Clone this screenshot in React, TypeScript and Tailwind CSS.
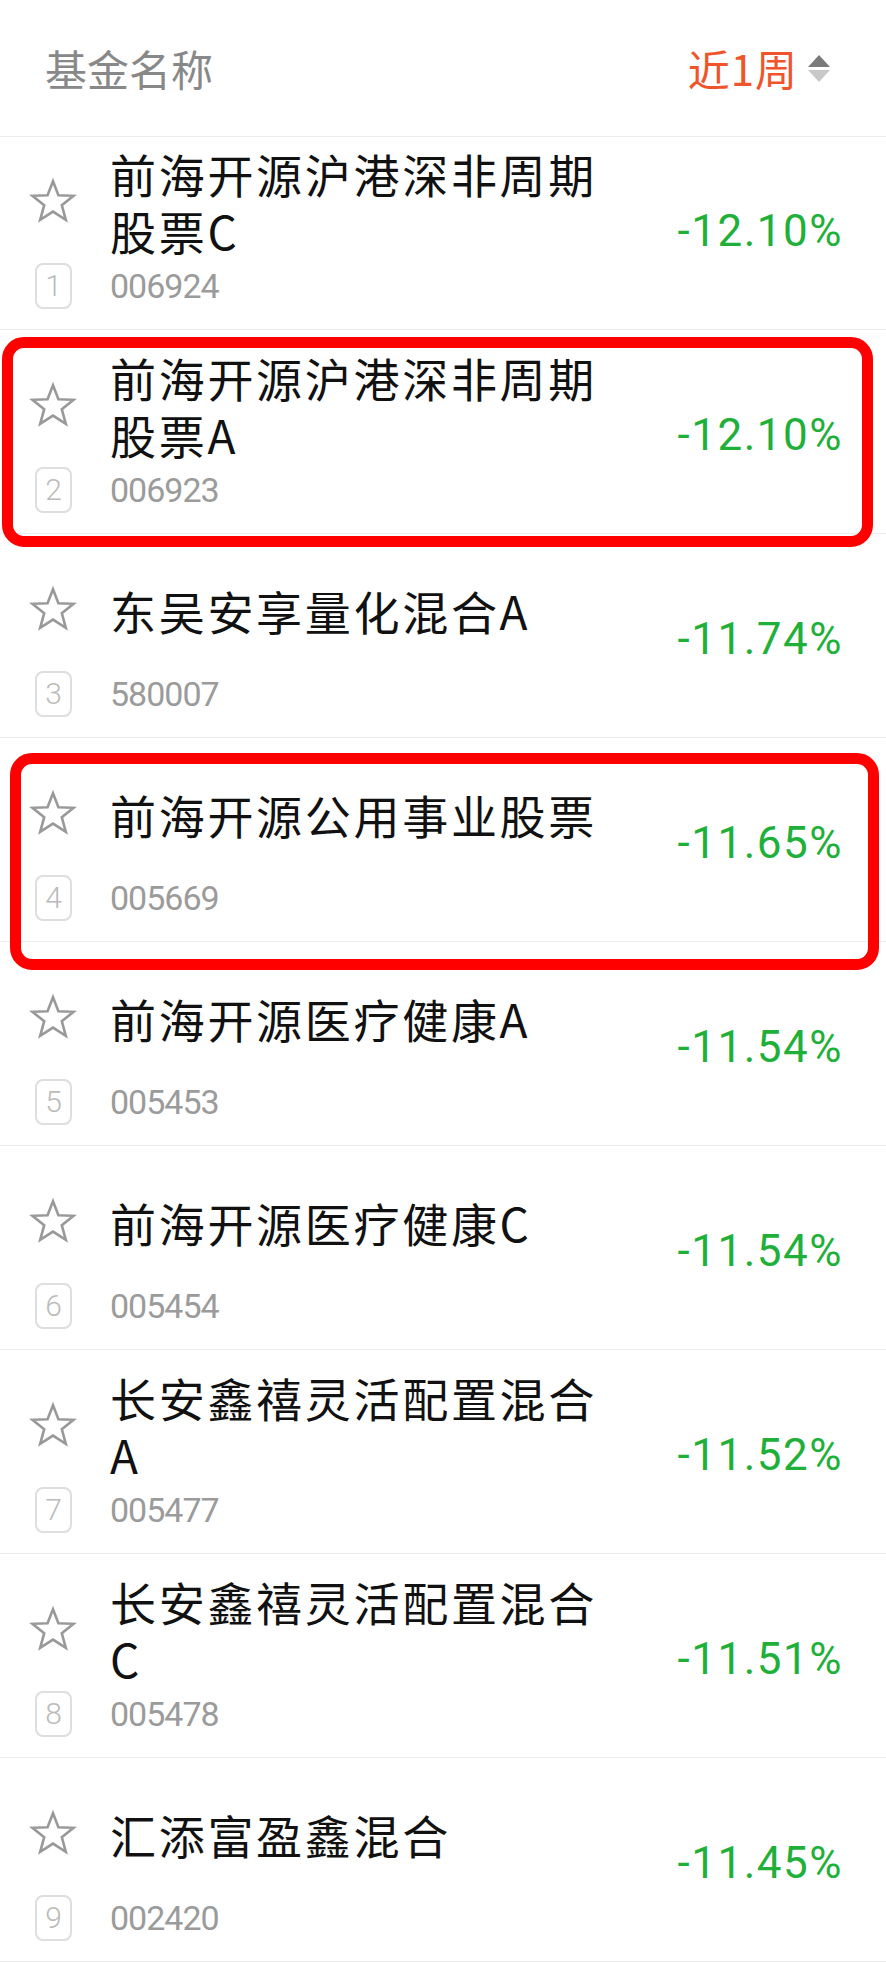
import React from 'react'

type Fund = {
    rank: number
    name: string
    code: string
    change: string
}

const FUNDS: Fund[] = [
    { rank: 1, name: '前海开源沪港深非周期股票C', code: '006924', change: '-12.10%' },
    { rank: 2, name: '前海开源沪港深非周期股票A', code: '006923', change: '-12.10%' },
    { rank: 3, name: '东吴安享量化混合A', code: '580007', change: '-11.74%' },
    { rank: 4, name: '前海开源公用事业股票', code: '005669', change: '-11.65%' },
    { rank: 5, name: '前海开源医疗健康A', code: '005453', change: '-11.54%' },
    { rank: 6, name: '前海开源医疗健康C', code: '005454', change: '-11.54%' },
    { rank: 7, name: '长安鑫禧灵活配置混合A', code: '005477', change: '-11.52%' },
    { rank: 8, name: '长安鑫禧灵活配置混合C', code: '005478', change: '-11.51%' },
    { rank: 9, name: '汇添富盈鑫混合', code: '002420', change: '-11.45%' },
]

const CJK = "font-['Noto_Sans_CJK_SC','Noto_Sans',sans-serif]"
const NUM = "font-['Roboto','Noto_Sans_CJK_SC',sans-serif]"

function StarIcon() {
    return (
        <svg width="48" height="48" viewBox="0 0 24 24" fill="none" aria-hidden="true">
            <polygon
                points="12,1.6 14.7,8.6 22.3,8.9 16.4,13.6 18.4,20.9 12,16.8 5.6,20.9 7.6,13.6 1.7,8.9 9.3,8.6"
                stroke="#999"
                strokeWidth="1.3"
                strokeLinejoin="miter"
            />
        </svg>
    )
}

function SortIcon() {
    return (
        <svg width="22" height="27" viewBox="0 0 22 27" aria-hidden="true" className="ml-[10px]">
            <polygon points="11,0 22,12 0,12" fill="#7a7a7a" />
            <polygon points="0,15 22,15 11,27" fill="#c8c8c8" />
        </svg>
    )
}

function FundRow({ fund }: { fund: Fund }) {
    return (
        <div className="flex h-[204px] items-center border-b border-[#ececec] pr-[43px]">
            <div className="flex flex-1 flex-col self-stretch pt-[14px]">
                <div className="flex h-[124px] items-center">
                    <div className="ml-[29px] flex w-[48px] justify-center">
                        <StarIcon />
                    </div>
                    <div
                        className={`ml-[33px] w-[500px] text-[46px] leading-[57px] tracking-[2.7px] text-[#111] ${CJK}`}
                    >
                        {fund.name}
                    </div>
                </div>
                <div className="flex h-[44px] items-center">
                    <div
                        className={`ml-[35px] flex h-[46px] w-[37px] shrink-0 items-center justify-center rounded-[8px] border-2 border-[#dedede] text-[30px] font-light leading-none text-[#bbb] ${NUM}`}
                    >
                        {fund.rank}
                    </div>
                    <div
                        className={`ml-[38px] text-[34px] leading-none tracking-[-1px] text-[#9b9b9b] ${NUM}`}
                    >
                        {fund.code}
                    </div>
                </div>
            </div>
            <div className={`pt-[6px] text-[44px] leading-none tracking-[1.5px] text-[#1fb03a] ${NUM}`}>
                {fund.change}
            </div>
        </div>
    )
}

export default function App() {
    const [first, ...rest] = FUNDS
    return (
        <div className="relative min-h-[1963px] w-[886px] overflow-hidden bg-white">
            <div className="flex h-[137px] items-center justify-between border-b border-[#ececec] pl-[45px] pr-[56px]">
                <span className={`text-[42px] leading-none text-[#888] ${CJK}`}>基金名称</span>
                <div className="flex items-center">
                    <span className={`text-[42px] leading-none tracking-[1px] text-[#f0542a] ${CJK}`}>近1周</span>
                    <SortIcon />
                </div>
            </div>

            {/* first row sits partly under the header, so its top is cut */}
            <div className="h-[193px] overflow-hidden">
                <div className="-mt-[11px]">
                    <FundRow fund={first} />
                </div>
            </div>
            {rest.map((fund) => (
                <FundRow key={fund.code} fund={fund} />
            ))}

            {/* annotation boxes drawn over the list */}
            <div className="pointer-events-none absolute left-[2px] top-[337px] h-[210px] w-[871px] rounded-[22px] border-[11px] border-[#ff0000]" />
            <div className="pointer-events-none absolute left-[10px] top-[753px] h-[217px] w-[869px] rounded-[22px] border-[11px] border-[#ff0000]" />
        </div>
    )
}
